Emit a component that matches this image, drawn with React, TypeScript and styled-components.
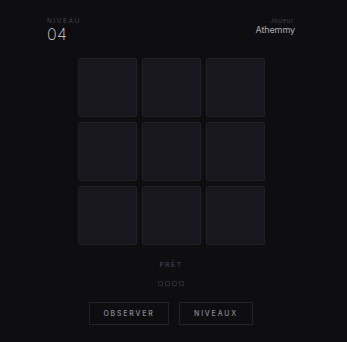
import { FC } from 'react';
import styled, { createGlobalStyle } from 'styled-components';

const GlobalStyle = createGlobalStyle`
   html, body {
      margin: 0;
      padding: 0;
      background: #0e0e10;
   }
   body {
      font-family: Inter, "Liberation Sans", sans-serif;
   }
`;

const Screen = styled.div`
   width: 347px;
   height: 342px;
   box-sizing: border-box;
   padding: 17px 52px 0 47px;
   display: flex;
   flex-direction: column;
   align-items: center;
   background: #0e0e10;
   overflow: hidden;
`;

const Header = styled.header`
   align-self: stretch;
   display: flex;
   justify-content: space-between;
   align-items: flex-start;
`;

const Stat = styled.div<{ $align?: 'left' | 'right' }>`
   display: flex;
   flex-direction: column;
   align-items: ${(p) => (p.$align === 'right' ? 'flex-end' : 'flex-start')};
`;

const Label = styled.span`
   font-size: 6.5px;
   letter-spacing: 1.6px;
   line-height: 8px;
   color: #45444f;
   text-transform: uppercase;
`;

const Level = styled.span`
   font-size: 16px;
   font-weight: 200;
   line-height: 18px;
   color: #d4d4dc;
   letter-spacing: 0.4px;
`;

const SmallLabel = styled.span`
   font-size: 6px;
   letter-spacing: 0.7px;
   line-height: 8px;
   color: #45444f;
   margin-right: 1px;
`;

const Player = styled.span`
   font-size: 9px;
   line-height: 10px;
   color: #adacb4;
   letter-spacing: -0.1px;
`;

const Board = styled.div`
   margin-top: 15px;
   display: grid;
   grid-template-columns: repeat(3, 59px);
   grid-auto-rows: 59px;
   gap: 5px;
`;

const Tile = styled.div`
   background: #18171d;
   border: 1px solid #222128;
   border-radius: 2px;
`;

const Status = styled.div`
   margin-top: 16px;
   font-size: 6.5px;
   font-weight: 600;
   letter-spacing: 1.6px;
   color: #3c3b4a;
   text-transform: uppercase;
   line-height: 8px;
`;

const Dots = styled.div`
   margin-top: 12px;
   display: flex;
   gap: 2px;
`;

const Dot = styled.span`
   width: 3px;
   height: 3px;
   border: 1px solid #2c2b36;
   border-radius: 1px;
`;

const Actions = styled.div`
   margin-top: 16px;
   display: flex;
   gap: 10px;
`;

const Button = styled.button<{ $width: number }>`
   width: ${(p) => p.$width}px;
   height: 23px;
   padding: 0;
   background: transparent;
   border: 1px solid #25242b;
   color: #8d8c98;
   font-family: Inter, "Liberation Sans", sans-serif;
   font-size: 7px;
   font-weight: 500;
   letter-spacing: 1.8px;
   text-transform: uppercase;
   cursor: pointer;
`;

const App: FC = () => (
   <>
      <GlobalStyle />
      <Screen>
         <Header>
            <Stat>
               <Label>Niveau</Label>
               <Level>04</Level>
            </Stat>
            <Stat $align="right">
               <SmallLabel>Joueur</SmallLabel>
               <Player>Athemmy</Player>
            </Stat>
         </Header>
         <Board>
            {Array.from({ length: 9 }).map((_, i) => (
               <Tile key={i} />
            ))}
         </Board>
         <Status>Prêt</Status>
         <Dots>
            {Array.from({ length: 4 }).map((_, i) => (
               <Dot key={i} />
            ))}
         </Dots>
         <Actions>
            <Button $width={80}>Observer</Button>
            <Button $width={74}>Niveaux</Button>
         </Actions>
      </Screen>
   </>
);

export default App;
